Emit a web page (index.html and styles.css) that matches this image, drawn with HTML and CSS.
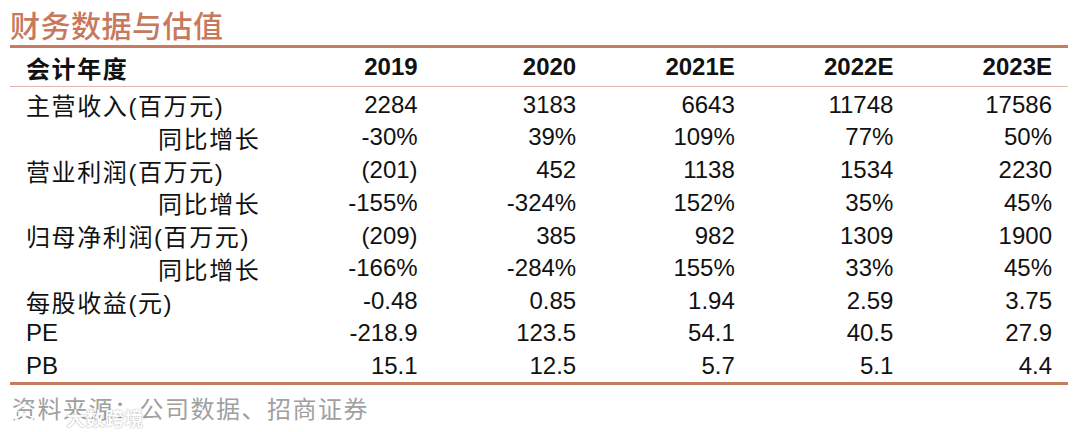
FILE: index.html
```html
<!DOCTYPE html>
<html lang="zh-CN">
<head>
<meta charset="utf-8">
<title>财务数据与估值</title>
<link rel="stylesheet" href="styles.css">
</head>
<body>
<div class="page">
  <h1 class="title">财务数据与估值</h1>
  <div class="table">
    <div class="row head">
      <div class="label">会计年度</div>
      <div class="num">2019</div>
      <div class="num">2020</div>
      <div class="num">2021E</div>
      <div class="num">2022E</div>
      <div class="num">2023E</div>
    </div>
    <div class="row">
      <div class="label">主营收入(百万元)</div>
      <div class="num">2284</div><div class="num">3183</div><div class="num">6643</div><div class="num">11748</div><div class="num">17586</div>
    </div>
    <div class="row">
      <div class="label sub">同比增长</div>
      <div class="num">-30%</div><div class="num">39%</div><div class="num">109%</div><div class="num">77%</div><div class="num">50%</div>
    </div>
    <div class="row">
      <div class="label">营业利润(百万元)</div>
      <div class="num">(201)</div><div class="num">452</div><div class="num">1138</div><div class="num">1534</div><div class="num">2230</div>
    </div>
    <div class="row">
      <div class="label sub">同比增长</div>
      <div class="num">-155%</div><div class="num">-324%</div><div class="num">152%</div><div class="num">35%</div><div class="num">45%</div>
    </div>
    <div class="row">
      <div class="label">归母净利润(百万元)</div>
      <div class="num">(209)</div><div class="num">385</div><div class="num">982</div><div class="num">1309</div><div class="num">1900</div>
    </div>
    <div class="row">
      <div class="label sub">同比增长</div>
      <div class="num">-166%</div><div class="num">-284%</div><div class="num">155%</div><div class="num">33%</div><div class="num">45%</div>
    </div>
    <div class="row">
      <div class="label">每股收益(元)</div>
      <div class="num">-0.48</div><div class="num">0.85</div><div class="num">1.94</div><div class="num">2.59</div><div class="num">3.75</div>
    </div>
    <div class="row">
      <div class="label latin">PE</div>
      <div class="num">-218.9</div><div class="num">123.5</div><div class="num">54.1</div><div class="num">40.5</div><div class="num">27.9</div>
    </div>
    <div class="row">
      <div class="label latin">PB</div>
      <div class="num">15.1</div><div class="num">12.5</div><div class="num">5.7</div><div class="num">5.1</div><div class="num">4.4</div>
    </div>
  </div>
  <div class="source">
    <span>资料来源：公司数据、招商证券</span>
    <div class="watermark">
      <svg class="wm-logo" width="24" height="24" viewBox="0 0 24 24"><path d="M17 4 A9 9 0 1 0 20 16" fill="none" stroke="#fff" stroke-width="3" stroke-linecap="round"/><circle cx="12" cy="12" r="2.5" fill="#fff"/></svg>
      <span class="wm-text">大数跨境</span>
    </div>
  </div>
</div>
</body>
</html>
```
FILE: styles.css
```css
* { box-sizing: border-box; }
html, body { margin: 0; padding: 0; background: #fff; }
body {
  width: 1080px;
  height: 432px;
  overflow: hidden;
  font-family: "Liberation Sans", "Noto Sans CJK SC", sans-serif;
  color: #111;
}
.page {
  padding: 0 12px 0 10px;
}
.title {
  margin: 0;
  padding-top: 6px;
  height: 45px;
  font-family: "Noto Sans CJK SC", sans-serif;
  font-weight: 500;
  font-size: 30px;
  line-height: 36px;
  letter-spacing: 0.5px;
  color: #c8785c;
}
.table {
  border-top: 3px solid #c97b62;
  border-bottom: 3px solid #c97b62;
}
.row {
  display: grid;
  grid-template-columns: 265px repeat(5, 1fr);
  align-items: center;
  height: 32.8px;
  font-size: 24px;
}
.row.head {
  height: 39px;
  border-bottom: 1px solid #e2b7a8;
  font-weight: 700;
}
.label {
  padding-left: 16px;
  letter-spacing: 1.6px;
  white-space: nowrap;
}
.label.latin { letter-spacing: 0; }
.label.sub { padding-left: 148px; }
.num {
  text-align: right;
  padding-right: 16px;
}
.source {
  position: relative;
  margin-top: 8px;
  padding-left: 2px;
  font-family: "Noto Sans CJK SC", sans-serif;
  font-size: 24px;
  line-height: 30px;
  letter-spacing: 1.5px;
  color: #a0a0a0;
}
.watermark {
  position: absolute;
  left: 2px;
  top: 8px;
  display: flex;
  align-items: center;
  gap: 0;
  opacity: 0.9;
}
.wm-text {
  font-size: 19px;
  line-height: 22px;
  font-weight: 700;
  color: #fff;
  letter-spacing: 0.5px;
  margin-left: 30px;
  margin-top: 6px;
  text-shadow: 0 0 1px rgba(0,0,0,0.35), 0 0 2px rgba(0,0,0,0.2);
}
```
